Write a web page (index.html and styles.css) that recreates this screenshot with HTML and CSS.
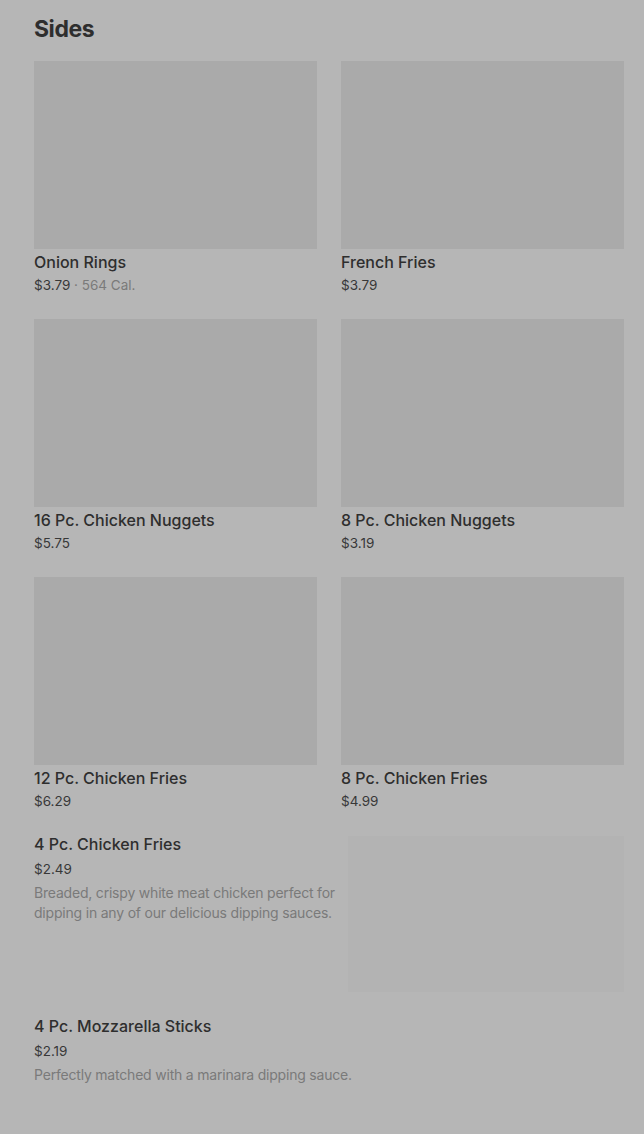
FILE: index.html
```html
<!DOCTYPE html>
<html lang="en">
<head>
<meta charset="utf-8">
<title>Sides</title>
<link rel="stylesheet" href="styles.css">
</head>
<body>
<main class="page">
  <h2 class="section-title">Sides</h2>
  <div class="grid">
    <div class="card">
      <div class="thumb"></div>
      <div class="name">Onion Rings</div>
      <div class="price">$3.79 <span class="cal">· 564 Cal.</span></div>
    </div>
    <div class="card">
      <div class="thumb"></div>
      <div class="name">French Fries</div>
      <div class="price">$3.79</div>
    </div>
    <div class="card">
      <div class="thumb"></div>
      <div class="name">16 Pc. Chicken Nuggets</div>
      <div class="price">$5.75</div>
    </div>
    <div class="card">
      <div class="thumb"></div>
      <div class="name">8 Pc. Chicken Nuggets</div>
      <div class="price">$3.19</div>
    </div>
    <div class="card">
      <div class="thumb"></div>
      <div class="name">12 Pc. Chicken Fries</div>
      <div class="price">$6.29</div>
    </div>
    <div class="card">
      <div class="thumb"></div>
      <div class="name">8 Pc. Chicken Fries</div>
      <div class="price">$4.99</div>
    </div>
  </div>
  <div class="list-item first">
    <div class="info">
      <div class="name">4 Pc. Chicken Fries</div>
      <div class="price spaced">$2.49</div>
      <div class="desc">Breaded, crispy white meat chicken perfect for dipping in any of our delicious dipping sauces.</div>
    </div>
    <div class="side-thumb"></div>
  </div>
  <div class="list-item">
    <div class="info">
      <div class="name">4 Pc. Mozzarella Sticks</div>
      <div class="price spaced">$2.19</div>
      <div class="desc">Perfectly matched with a marinara dipping sauce.</div>
    </div>
  </div>
</main>
</body>
</html>
```
FILE: styles.css
```css
html, body {
  margin: 0;
  padding: 0;
  background: #b6b6b6;
}
body {
  font-family: Inter, "Noto Sans", "Liberation Sans", sans-serif;
  color: #2e2e2e;
}
.page {
  padding: 0 20px 40px 34px;
}
.section-title {
  margin: 13px 0 16px 0;
  font-size: 23px;
  line-height: 32px;
  font-weight: 700;
  letter-spacing: -0.45px;
  color: #2e2e2e;
}
.grid {
  display: grid;
  grid-template-columns: 1fr 1fr;
  column-gap: 24px;
  row-gap: 24px;
}
.thumb {
  height: 188px;
  background: #aaaaaa;
}
.name {
  margin-top: 1px;
  font-size: 16px;
  line-height: 24px;
  font-weight: 500;
  color: #2e2e2e;
}
.price {
  margin-top: 1px;
  font-size: 13.5px;
  line-height: 20px;
  color: #383838;
}
.price.spaced {
  margin-top: 3px;
}
.cal {
  color: #7a7a7a;
}
.list-item {
  display: flex;
  gap: 10px;
  margin-top: 22px;
}
.list-item.first {
  margin-top: 21px;
}
.info {
  flex: 1;
}
.list-item .name {
  margin-top: 0;
}
.desc {
  margin-top: 4px;
  font-size: 14px;
  line-height: 20px;
  color: #7a7a7a;
  letter-spacing: -0.2px;
}
.side-thumb {
  width: 276px;
  height: 156px;
  margin-top: 4px;
  background: #b3b3b3;
  flex-shrink: 0;
}
```
